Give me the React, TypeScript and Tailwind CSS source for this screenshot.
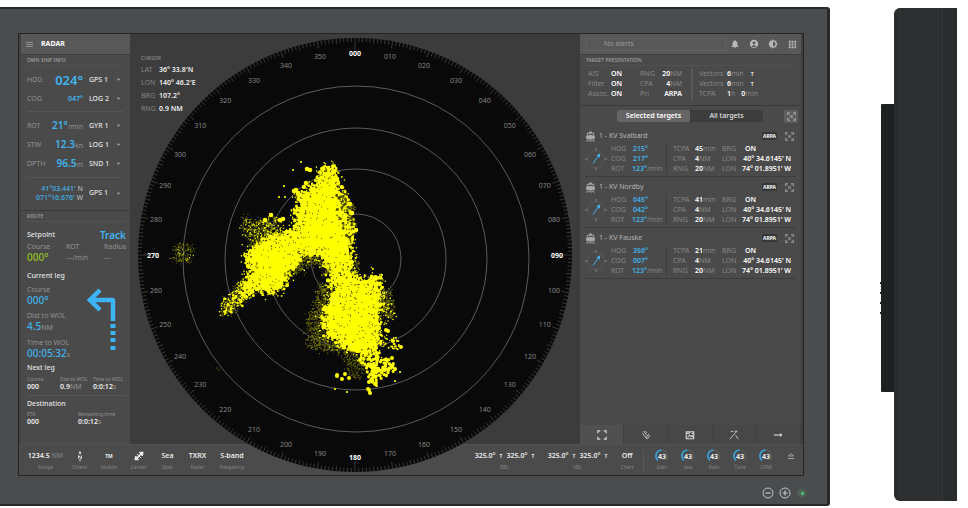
import type { ReactNode } from 'react';
import {
  MdAccountCircle,
  MdApps,
  MdArrowDropDown,
  MdBrightness6,
  MdDirectionsBoat,
  MdMenu,
  MdNotifications,
} from 'react-icons/md';

type Point = [number, number];

interface Target {
  name: string;
  hdg: string;
  cog: string;
  tcpa: string;
}

const targets: Target[] = [
  { name: '1 - KV Svalbard', hdg: '215°', cog: '217°', tcpa: '45' },
  { name: '1 - KV Nordby', hdg: '045°', cog: '042°', tcpa: '41' },
  { name: '1 - KV Fauske', hdg: '356°', cog: '007°', tcpa: '21' },
];

const gauges = ['Gain', 'Sea', 'Rain', 'Tune', 'CFAR'];

// Radar geometry, in the svg's own units
const DIAL = { x: 355, y: 255, r: 217 };
const RINGS = { x: 356, y: 259, radii: [45, 90, 131, 173] };

// Small seeded generator so the echoes are the same on every render
function createRandom(seed: number) {
  let s = seed;
  return () => {
    s = (s * 1664525 + 1013904223) % 4294967296;
    return s / 4294967296;
  };
}

function inside([x, y]: Point, poly: Point[]) {
  let hit = false;
  for (let i = 0, j = poly.length - 1; i < poly.length; j = i++) {
    const [xi, yi] = poly[i];
    const [xj, yj] = poly[j];
    if (yi > y !== yj > y && x < ((xj - xi) * (y - yi)) / (yj - yi) + xi) hit = !hit;
  }
  return hit;
}

// Path of zero-length segments: round caps turn each one into a dot
function scatter(poly: Point[], count: number, spread: number, seed: number) {
  const rand = createRandom(seed);
  const xs = poly.map((p) => p[0]);
  const ys = poly.map((p) => p[1]);
  const minX = Math.min(...xs);
  const minY = Math.min(...ys);
  const w = Math.max(...xs) - minX;
  const h = Math.max(...ys) - minY;
  let d = '';
  let placed = 0;
  while (placed < count) {
    const p: Point = [minX + rand() * w, minY + rand() * h];
    if (!inside(p, poly)) continue;
    const x = p[0] + (rand() + rand() - 1) * spread;
    const y = p[1] + (rand() + rand() - 1) * spread;
    d += `M${x.toFixed(1)} ${y.toFixed(1)}h0`;
    placed++;
  }
  return d;
}

// Dots along the outline, which give a solid mass its ragged edge
function fringe(poly: Point[], perSide: number, spread: number, seed: number) {
  const rand = createRandom(seed);
  let d = '';
  poly.forEach(([x1, y1], i) => {
    const [x2, y2] = poly[(i + 1) % poly.length];
    for (let n = 0; n < perSide; n++) {
      const t = rand();
      const x = x1 + (x2 - x1) * t + (rand() + rand() - 1) * spread;
      const y = y1 + (y2 - y1) * t + (rand() + rand() - 1) * spread;
      d += `M${x.toFixed(1)} ${y.toFixed(1)}h0`;
    }
  });
  return d;
}

function dots(points: Point[]) {
  return points.map(([x, y]) => `M${x} ${y}h0`).join('');
}

const upperMass: Point[] = [
  [331, 169], [335, 178], [337, 190], [340, 198], [342, 206], [342, 216], [349, 226],
  [348, 240], [349, 250], [350, 262], [348, 270], [341, 273], [333, 271], [328, 262],
  [321, 253], [311, 251], [301, 256], [294, 263], [289, 271], [284, 280], [279, 290],
  [266, 290], [254, 289], [249, 281], [253, 269], [250, 261], [247, 254], [256, 248],
  [265, 242], [276, 237], [288, 235], [297, 229], [300, 222], [297, 214], [301, 206],
  [301, 197], [308, 192], [316, 184], [322, 176], [327, 171],
];

const lowerMass: Point[] = [
  [332, 280], [346, 274], [358, 281], [374, 279], [378, 288], [378, 303], [377, 318],
  [374, 327], [380, 338], [376, 347], [366, 350], [354, 348], [342, 343], [333, 336],
  [328, 330], [326, 320], [328, 308], [333, 300], [336, 291],
];

const lowerTip: Point[] = [
  [360, 348], [374, 350], [382, 359], [392, 363], [394, 370], [384, 376], [377, 376],
  [375, 384], [371, 379], [367, 368],
];

const tail: Point[] = [[250, 279], [256, 288], [244, 300], [232, 312], [222, 315], [221, 305], [232, 294], [240, 284]];
const upperTail: Point[] = [[250, 277], [260, 290], [248, 298], [240, 300], [242, 288]];
const upperRight: Point[] = [[337, 188], [345, 196], [352, 206], [355, 230], [350, 242], [340, 232], [338, 212]];
const upperLeft: Point[] = [[243, 217], [262, 222], [276, 216], [288, 236], [270, 246], [252, 246], [244, 234]];
const innerShade: Point[] = [[296, 258], [312, 250], [326, 254], [336, 272], [326, 276], [314, 262], [300, 272], [290, 274]];
const lowerLeft: Point[] = [[318, 284], [334, 282], [326, 306], [324, 330], [340, 346], [352, 352], [328, 350], [308, 348], [308, 318], [316, 304]];
const lowerRight: Point[] = [[377, 290], [390, 290], [394, 308], [394, 320], [382, 316]];
const bottomShade: Point[] = [[344, 350], [360, 354], [368, 370], [356, 380], [347, 372]];
const eastShade: Point[] = [[349, 262], [358, 260], [360, 272], [352, 276]];
const westEcho: Point[] = [[174, 245], [192, 245], [194, 262], [175, 262]];
const eastClumps: Point[] = [[380, 344], [396, 336], [402, 347], [390, 352]];

const upperEdge: Point[] = [
  [307, 169], [310, 170], [333, 168], [334, 172], [294, 191], [298, 193], [296, 190], [300, 195],
  [280, 220], [283, 219], [271, 215], [265, 220], [342, 187], [346, 198], [350, 204], [352, 213],
  [356, 230], [352, 239], [338, 183], [306, 183], [246, 255], [248, 266],
];
const lowerEdge: Point[] = [
  [337, 375], [342, 379], [345, 374], [349, 378], [337, 376], [368, 389], [370, 393], [369, 390],
  [392, 358], [395, 369], [386, 330], [366, 348], [369, 382], [375, 384], [360, 360], [393, 341],
  [401, 347], [378, 278], [350, 275], [388, 331],
];
const specks: Point[] = [
  [301, 162], [293, 170], [284, 186], [279, 197], [285, 197], [373, 269], [382, 275], [400, 372],
  [395, 381], [335, 389], [347, 392], [296, 202],
];

const tabCls = 'flex h-[19px] items-center justify-center border-r border-[#414141]';

function Caret() {
  return <MdArrowDropDown className="h-[9px] w-[9px] shrink-0 text-[#a5a5a5]" />;
}

function SourceSelect({ label, value }: { label: string; value: string }) {
  return (
    <div className="ml-[6px] flex w-[34px] shrink-0 items-center justify-between">
      <select
        aria-label={label}
        defaultValue={value}
        className="w-[25px] appearance-none bg-transparent text-[7px] leading-[10px] font-medium text-[#e2e2e2]"
      >
        <option>{value}</option>
      </select>
      <Caret />
    </div>
  );
}

interface ShipRowProps {
  label: string;
  value: string;
  unit?: string;
  source: string;
  valueClass?: string;
}

function ShipRow({ label, value, unit, source, valueClass = 'text-[10px]' }: ShipRowProps) {
  return (
    <div className="flex h-[19px] items-center">
      <span className="text-[#929292]">{label}</span>
      <span className="flex flex-1 items-baseline justify-end">
        <span className={`font-semibold text-[#41b2ec] ${valueClass}`}>{value}</span>
        {unit && <span className="text-[#929292]">{unit}</span>}
      </span>
      <SourceSelect label={`${label} source`} value={source} />
    </div>
  );
}

function SectionTitle({ children }: { children: ReactNode }) {
  return (
    <h2 className="h-[11px] border-b border-[#525252] text-[5px] leading-[11px] font-medium text-[#a3a3a3]">
      {children}
    </h2>
  );
}

function RouteValue({ label, value, unit }: { label: string; value: string; unit?: string }) {
  return (
    <div>
      <div className="leading-[10px] text-[#929292]">{label}</div>
      <div className="flex items-baseline leading-[11px]">
        <span className="text-[10px] font-medium text-[#41b2ec]">{value}</span>
        {unit && <span className="text-[#929292]">{unit}</span>}
      </div>
    </div>
  );
}

function SmallValue({ label, value, unit }: { label: string; value: string; unit?: string }) {
  return (
    <div className="whitespace-nowrap">
      <div className="text-[5px] leading-[8px] text-[#929292]">{label}</div>
      <div className="leading-[8px] font-semibold text-[#ececec]">
        {value}
        {unit && <span className="font-normal text-[#929292]">{unit}</span>}
      </div>
    </div>
  );
}

function TurnArrow() {
  return (
    <svg viewBox="0 0 30 64" className="mt-[3px] h-[64px] w-[30px] text-[#3db5f5]" fill="none" stroke="currentColor">
      <path d="M13 2 3 12l10 10M3 12h22q1 0 1 1v20" strokeWidth="4.5" />
      <path d="M26 36v4M26 43v4M26 50v4M26 58v4" strokeWidth="5" />
    </svg>
  );
}

function LeftPanel() {
  return (
    <aside className="col-start-1 row-start-1 flex flex-col border-l-2 border-[#424242] bg-[#4a4a4a]">
      <header className="flex h-5 items-center gap-[7px] bg-[#585858] pl-[4px]">
        <button type="button" aria-label="Menu" className="text-[#a8a8a8]">
          <MdMenu className="h-[9px] w-[9px]" />
        </button>
        <h1 className="text-[7px] font-bold text-white">RADAR</h1>
      </header>
      <div className="border-t border-[#3e3e3e] pr-[7px] pl-[6px]">
        <SectionTitle>OWN SHIP INFO</SectionTitle>
        <div className="border-b border-[#565656] pt-1 pb-[3px]">
          <ShipRow label="HDG" value="024°" source="GPS 1" valueClass="text-[13px]" />
          <ShipRow label="COG" value="047°" source="LOG 2" valueClass="text-[7px]" />
        </div>
        <div className="border-b border-[#565656] py-1">
          <ShipRow label="ROT" value="21°" unit="/min" source="GYR 1" />
          <ShipRow label="STW" value="12.3" unit="kn" source="LOG 1" />
          <ShipRow label="DPTH" value="96.5" unit="m" source="SND 1" />
        </div>
        <div className="flex items-center pt-[6px] pb-2">
          <div className="flex-1 text-right leading-[9px] font-medium text-[#41b2ec]">
            <div>41°03.441' <span className="text-[#b5b5b5]">N</span></div>
            <div>071°16.676' <span className="text-[#b5b5b5]">W</span></div>
          </div>
          <SourceSelect label="Position source" value="GPS 1" />
        </div>
      </div>
      <div className="border-t border-[#3a3a3a] pr-[4px] pl-[6px]">
        <SectionTitle>ROUTE</SectionTitle>
        <div className="mt-[6px] flex h-[13px] items-center justify-between">
          <h3 className="font-medium text-[#e2e2e2]">Setpoint</h3>
          <span className="text-[10px] font-semibold text-[#41b2ec]">Track</span>
        </div>
        <div className="mt-px grid grid-cols-[39px_38px_1fr] text-[#929292]">
          <span className="leading-[10px]">Course</span>
          <span className="leading-[10px]">ROT</span>
          <span className="leading-[10px]">Radius</span>
          <span className="text-[10px] leading-[11px] font-medium text-[#93c11e]">000°</span>
          <span className="leading-[11px]">---/min</span>
          <span className="leading-[11px]">---</span>
        </div>
        <h3 className="mt-2 leading-[10px] font-medium text-[#e2e2e2]">Current leg</h3>
        <div className="mt-1 flex justify-between pr-[9px]">
          <div className="flex flex-col gap-[5px]">
            <RouteValue label="Course" value="000°" />
            <RouteValue label="Dist to WOL" value="4.5" unit="NM" />
            <RouteValue label="Time to WOL" value="00:05:32" unit="s" />
          </div>
          <TurnArrow />
        </div>
        <h3 className="mt-[3px] leading-[10px] font-medium text-[#e2e2e2]">Next leg</h3>
        <div className="mt-[2px] grid grid-cols-[33px_33px_1fr] border-b border-[#565656] pb-1">
          <SmallValue label="Course" value="000" />
          <SmallValue label="Dist to WOL" value="0.9" unit="NM" />
          <SmallValue label="Time to WOL" value="0:0:12" unit="s" />
        </div>
        <h3 className="mt-[3px] leading-[10px] font-medium text-[#e2e2e2]">Destination</h3>
        <div className="mt-px grid grid-cols-[51px_1fr]">
          <SmallValue label="ETA" value="000" />
          <SmallValue label="Remaining time" value="0:0:12" unit="s" />
        </div>
      </div>
    </aside>
  );
}

function polar(deg: number, r: number): Point {
  const a = (deg * Math.PI) / 180;
  return [DIAL.x + Math.sin(a) * r, DIAL.y - Math.cos(a) * r];
}

function BearingTicks() {
  const ticks = Array.from({ length: 360 }, (_, deg) => {
    const len = deg % 90 === 0 ? 11 : deg % 10 === 0 ? 7 : deg % 5 === 0 ? 5 : 4;
    const [x1, y1] = polar(deg, DIAL.r);
    const [x2, y2] = polar(deg, DIAL.r - len);
    return `M${x1.toFixed(1)} ${y1.toFixed(1)}L${x2.toFixed(1)} ${y2.toFixed(1)}`;
  });
  return <path d={ticks.join('')} stroke="#585858" strokeWidth="0.6" />;
}

function BearingLabels() {
  return (
    <>
      {Array.from({ length: 36 }, (_, i) => {
        const deg = i * 10;
        const [x, y] = polar(deg, 202);
        const main = deg % 90 === 0;
        return (
          <text
            key={deg}
            x={x}
            y={y + 2.5}
            textAnchor="middle"
            className={main ? 'fill-white text-[7px] font-bold' : 'fill-[#868686] text-[7px]'}
          >
            {String(deg).padStart(3, '0')}
          </text>
        );
      })}
    </>
  );
}

function Echoes() {
  return (
    <g strokeLinecap="round" fill="none">
      <g stroke="#6c6c08">
        <path d={scatter(upperLeft, 520, 5, 3)} strokeWidth="1.2" />
        <path d={scatter(innerShade, 420, 5, 4)} strokeWidth="1.3" />
        <path d={scatter(lowerLeft, 760, 6, 5)} strokeWidth="1.2" />
        <path d={scatter(lowerRight, 240, 4, 6)} strokeWidth="1.3" />
        <path d={scatter(upperRight, 260, 5, 7)} strokeWidth="1.8" />
        <path d={scatter(bottomShade, 160, 5, 8)} strokeWidth="1.3" />
        <path d={scatter(tail, 420, 6, 9)} strokeWidth="1.2" />
        <path d={scatter(westEcho, 170, 4, 10)} strokeWidth="1" />
        <path d={scatter(eastShade, 50, 4, 24)} strokeWidth="1.4" />
      </g>
      <g fill="#ffff00">
        <polygon points={upperMass.join(' ')} />
        <polygon points={lowerMass.join(' ')} />
      </g>
      <g stroke="#ffff00">
        <path d={fringe(upperMass, 9, 6, 11)} strokeWidth="2.8" />
        <path d={fringe(upperMass, 16, 11, 12)} strokeWidth="1.6" />
        <path d={fringe(upperMass, 3, 6, 13)} strokeWidth="4.4" />
        <path d={fringe(lowerMass, 14, 7, 14)} strokeWidth="2.8" />
        <path d={fringe(lowerMass, 22, 13, 15)} strokeWidth="1.5" />
        <path d={fringe(lowerMass, 5, 5, 16)} strokeWidth="4.4" />
        <path d={scatter(lowerTip, 150, 5, 17)} strokeWidth="3.2" />
        <path d={scatter(tail, 130, 5, 18)} strokeWidth="1.5" />
        <path d={scatter(tail, 26, 5, 19)} strokeWidth="2.6" />
        <path d={scatter(upperTail, 46, 4, 26)} strokeWidth="3" />
        <path d={scatter(upperLeft, 130, 6, 20)} strokeWidth="1.4" />
        <path d={scatter(upperRight, 50, 5, 21)} strokeWidth="2.8" />
        <path d={scatter(eastClumps, 22, 4, 22)} strokeWidth="2" />
        <path d={scatter(lowerRight, 30, 5, 25)} strokeWidth="1.6" />
        <path d={scatter(westEcho, 28, 5, 23)} strokeWidth="1" />
        <path d={dots(upperEdge)} strokeWidth="4.6" />
        <path d={dots(lowerEdge)} strokeWidth="4" />
        <path d={dots(specks)} strokeWidth="2.2" />
      </g>
      <g stroke="#4a4a08">
        <path d={scatter(upperMass, 190, 3, 31)} strokeWidth="1" />
        <path d={scatter(lowerMass, 120, 3, 32)} strokeWidth="1.1" />
        <path d={fringe(upperMass, 3, 10, 34)} strokeWidth="1.6" />
        <path d={fringe(lowerMass, 3, 10, 35)} strokeWidth="1.6" />
        <path d={scatter(upperRight, 22, 3, 33)} strokeWidth="2.8" />
      </g>
      <path d="M217 368h0M219 370h0" stroke="#77770a" strokeWidth="1.4" />
    </g>
  );
}

function Radar() {
  return (
    <svg viewBox="130 34 450 441" role="img" aria-label="Radar picture" className="pointer-events-none col-start-2 row-span-2 row-start-1 w-full">
      <circle cx={DIAL.x} cy={DIAL.y} r={DIAL.r} fill="#090909" />
      <BearingTicks />
      {RINGS.radii.map((r) => (
        <circle key={r} cx={RINGS.x} cy={RINGS.y} r={r} fill="none" stroke="#6e6e6e" strokeWidth="0.8" />
      ))}
      <Echoes />
      <BearingLabels />
    </svg>
  );
}

function CursorInfo() {
  const rows = [
    ['LAT', '36° 33.8′N'],
    ['LON', '140° 46.2′E'],
    ['BRG', '107.2°'],
    ['RNG', '0.9 NM'],
  ];
  return (
    <section className="col-start-2 row-start-1 self-start justify-self-start pt-[20px] pl-[11px]">
      <h2 className="text-[5px] leading-[8px] font-medium text-[#929292]">CURSOR</h2>
      <dl className="mt-px grid grid-cols-[18px_auto] leading-[13px]">
        {rows.map(([label, value]) => (
          <div key={label} className="contents">
            <dt className="text-[#858585]">{label}</dt>
            <dd className="font-semibold text-[#ececec]">{value}</dd>
          </div>
        ))}
      </dl>
    </section>
  );
}

function Corners({ className, children }: { className: string; children?: ReactNode }) {
  return (
    <svg viewBox="0 0 12 12" className={className} fill="none" stroke="currentColor">
      <path d="M1 4V1h3M8 1h3v3M11 8v3H8M4 11H1V8" strokeWidth="1.5" />
      {children}
    </svg>
  );
}

function LocateIcon() {
  return (
    <Corners className="h-[9px] w-[9px]">
      <path d="M3.5 3.5 5 5M8.5 3.5 7 5M3.5 8.5 5 7M8.5 8.5 7 7" />
      <circle cx="6" cy="6" r="1.2" fill="currentColor" stroke="none" />
    </Corners>
  );
}

function Compass() {
  return (
    <svg viewBox="0 0 22 22" className="h-[22px] w-[22px]" fill="none">
      <circle cx="11" cy="11" r="8.5" stroke="#5c5c5c" strokeWidth="0.7" />
      <path d="M11 0v2.500M11 19.500V22M0 11h2.500M19.500 11H22" stroke="#9c9c9c" strokeWidth="0.8" />
      <path d="m8 15.500 5-7" stroke="#41b2ec" strokeWidth="1" />
      <path d="m15.200 5.200-.4 4.600-3.500-2.400z" fill="#41b2ec" />
    </svg>
  );
}

function Unit({ children }: { children: ReactNode }) {
  return <span className="font-normal text-[#868686]">{children}</span>;
}

function TrueMark() {
  return <span className="text-[5px] font-bold text-[#e2e2e2]">T</span>;
}

function TargetPresentation() {
  return (
    <section className="border-y border-t-[#3e3e3e] border-b-[#3a3a3a] pr-[6px] pl-[6px]">
      <SectionTitle>TARGET PRESENTATION</SectionTitle>
      <div className="flex pt-[3px] pb-[6px] pl-[2px] leading-[10px] text-[#868686]">
        <dl className="grid grid-cols-[23px_29px]">
          <dt>AIS</dt>
          <dd className="font-semibold text-white">ON</dd>
          <dt>Filter</dt>
          <dd className="font-semibold text-white">ON</dd>
          <dt>Assoc.</dt>
          <dd className="font-semibold text-white">ON</dd>
        </dl>
        <dl className="grid grid-cols-[17px_25px] border-r-2 border-[#5a5a5a] pr-[9px]">
          <dt>RNG</dt>
          <dd className="text-right font-semibold text-white">20<Unit>NM</Unit></dd>
          <dt>CPA</dt>
          <dd className="text-right font-semibold text-white">4<Unit>NM</Unit></dd>
          <dt>Pri</dt>
          <dd className="text-right font-semibold text-white">ARPA</dd>
        </dl>
        <dl className="grid grid-cols-[28px_auto] pl-[6px]">
          <dt>Vectors</dt>
          <dd className="flex items-center gap-[7px] font-semibold text-white">
            <span>6<Unit>min</Unit></span>
            <TrueMark />
          </dd>
          <dt>Vectors</dt>
          <dd className="flex items-center gap-[7px] font-semibold text-white">
            <span>6<Unit>min</Unit></span>
            <TrueMark />
          </dd>
          <dt>TCPA</dt>
          <dd className="flex gap-[6px] font-semibold text-white">
            <span>1<Unit>h</Unit></span>
            <span>0<Unit>min</Unit></span>
          </dd>
        </dl>
      </div>
    </section>
  );
}

function TargetCard({ target }: { target: Target }) {
  return (
    <li className="border-b border-[#3d3d3d] pt-1 pb-[2px]">
      <div className="flex h-[12px] items-center">
        <MdDirectionsBoat className="mr-[3px] h-[11px] w-[11px] text-[#a8a8a8]" />
        <h3 className="flex-1 text-[#b5b5b5]">{target.name}</h3>
        <span className="mr-[8px] rounded-[1px] bg-[#363636] px-px text-[5px] leading-[8px] font-bold text-white">ARPA</span>
        <button type="button" aria-label={`Locate ${target.name}`} className="mr-[2px] text-[#a0a0a0]">
          <LocateIcon />
        </button>
      </div>
      <div className="mt-[2px] flex items-center leading-[10px]">
        <Compass />
        <dl className="grid grid-cols-[21px_34px] pl-[4px]">
          <dt className="text-[#868686]">HDG</dt>
          <dd className="pl-px font-semibold text-[#41b2ec]">{target.hdg}</dd>
          <dt className="text-[#868686]">COG</dt>
          <dd className="pl-px font-semibold text-[#41b2ec]">{target.cog}</dd>
          <dt className="text-[#868686]">ROT</dt>
          <dd className="font-semibold text-[#41b2ec]">123°<Unit>/min</Unit></dd>
        </dl>
        <dl className="grid flex-1 grid-cols-[22px_27px_20px_auto] justify-start border-l border-[#3d3d3d] pl-[6px] text-[#868686]">
          <dt>TCPA</dt>
          <dd className="font-semibold text-white">{target.tcpa}<Unit>min</Unit></dd>
          <dt>BRG</dt>
          <dd className="pl-[3px] font-semibold text-white">ON</dd>
          <dt>CPA</dt>
          <dd className="font-semibold text-white">4<Unit>NM</Unit></dd>
          <dt>LON</dt>
          <dd className="text-right font-semibold whitespace-nowrap text-white">40° 34.6145' N</dd>
          <dt>RNG</dt>
          <dd className="font-semibold text-white">20<Unit>NM</Unit></dd>
          <dt>LON</dt>
          <dd className="text-right font-semibold whitespace-nowrap text-white">74° 01.8951' W</dd>
        </dl>
      </div>
    </li>
  );
}

function RightPanel() {
  return (
    <aside className="col-start-3 row-start-1 flex flex-col border-r-2 border-[#3f3f40] bg-[#4a4a4a]">
      <header className="flex h-5 items-center bg-[#585858] pr-[3px] pl-[6px]">
        <div className="mr-[4px] flex h-[13px] flex-1 items-center rounded-[2px] border border-[#616161] pl-[17px] text-[#9c9c9c]">
          No alerts
        </div>
        <div className="flex gap-[9px] text-[#b8b8b8]">
          <button type="button" aria-label="Alerts"><MdNotifications className="h-[10px] w-[10px]" /></button>
          <button type="button" aria-label="Account"><MdAccountCircle className="h-[10px] w-[10px]" /></button>
          <button type="button" aria-label="Brightness"><MdBrightness6 className="h-[10px] w-[10px]" /></button>
          <button type="button" aria-label="Apps"><MdApps className="h-[11px] w-[11px]" /></button>
        </div>
      </header>
      <TargetPresentation />
      <div className="flex h-[20px] items-center justify-end pr-[3px]">
        <div className="flex rounded-[2px] bg-[#3d3d3d]">
          <button type="button" className="h-[12px] w-[73px] rounded-[2px] bg-[#656565] font-semibold text-white">
            Selected targets
          </button>
          <button type="button" className="h-[12px] w-[73px] font-medium text-[#e2e2e2]">
            All targets
          </button>
        </div>
        <button type="button" aria-label="Locate all" className="ml-[21px] flex h-[13px] w-[14px] items-center justify-center rounded-[2px] bg-[#5f5f5f] text-[#a8a8a8]">
          <LocateIcon />
        </button>
      </div>
      <ul className="flex-1 px-[5px]">
        {targets.map((target) => (
          <TargetCard key={target.name} target={target} />
        ))}
      </ul>
      <nav className="grid grid-cols-5 bg-[#474747] text-[#d5d5d5]">
        <button type="button" aria-label="Targets" className={`${tabCls} bg-[#505050]`}>
          <Corners className="h-[10px] w-[10px]" />
        </button>
        <button type="button" aria-label="Trails" className={tabCls}>
          <svg viewBox="0 0 12 12" className="h-[10px] w-[10px]" fill="none" stroke="currentColor">
            <path d="m3 1 3.500 5M1.500 3.500 6 9.500M6 9.500l1.500 1.500 3-4.500L9 5 6 9.500M5.500 1.500l1.500 2" />
          </svg>
        </button>
        <button type="button" aria-label="Chart" className={tabCls}>
          <svg viewBox="0 0 12 12" className="h-[10px] w-[10px]" fill="none" stroke="currentColor">
            <path d="M1.500 2h9v8.500h-9zM1 4h3.500l2-2M3 9l2.500-3L7 8l1.500-1.500L10 9M8 4h2" strokeWidth="1.3" />
          </svg>
        </button>
        <button type="button" aria-label="Tools" className={tabCls}>
          <svg viewBox="0 0 12 12" className="h-[10px] w-[10px]" fill="none" stroke="currentColor">
            <path d="m1 11 8.500-9.500M2 1.500l3 .5M8 6.500l3 4.500M6.500 1.500H10" />
          </svg>
        </button>
        <button type="button" aria-label="Next" className={tabCls}>
          <svg viewBox="0 0 12 12" className="h-[10px] w-[10px]" fill="none" stroke="currentColor">
            <path d="M1 6h9" strokeWidth="1.4" />
            <path d="m8.500 3.500 3 2.500-3 2.500z" fill="currentColor" stroke="none" />
          </svg>
        </button>
      </nav>
    </aside>
  );
}

function BarItem({ label, width, children }: { label: string; width: string; children: ReactNode }) {
  return (
    <div className={`flex flex-col items-center ${width}`}>
      <div className="flex h-[12px] items-center font-semibold whitespace-nowrap text-[#ececec]">{children}</div>
      <div className="mt-px text-[5px] leading-[9px] text-[#868686]">{label}</div>
    </div>
  );
}

function BearingPair() {
  return (
    <span className="flex items-center gap-[4px]">
      325.0° <TrueMark /> 325.0° <TrueMark />
    </span>
  );
}

function Gauge() {
  return (
    <svg viewBox="0 0 16 14" className="h-[14px] w-[16px]" fill="none">
      <path d="M7.500 1a6 6 0 0 1 4 10.500" stroke="#5e5e5e" strokeWidth="1.2" />
      <path d="M4 11.500A6 6 0 0 1 7.500 1" stroke="#35a5dd" strokeWidth="1.6" />
      <text x="8" y="10" textAnchor="middle" className="fill-white text-[7px] font-semibold">43</text>
    </svg>
  );
}

function BottomBar() {
  return (
    <footer className="col-span-3 col-start-1 row-start-2 flex items-start justify-between border-t border-[#505050] bg-[#4b4b4b] pt-[5px]">
      <div className="flex pl-[7px]">
        <BarItem label="Range" width="w-[39px]">1234.5&nbsp;<Unit>NM</Unit></BarItem>
        <BarItem label="Orient" width="w-[29px]">
          <svg viewBox="0 0 8 12" className="h-[11px] w-[8px]" fill="none" stroke="currentColor">
            <path d="M4 1v3M4 8.500v3M2.500 8.500V5l3 3.500V5" />
            <path d="M2.500 2.500 4 0l1.500 2.500z" fill="currentColor" stroke="none" />
          </svg>
        </BarItem>
        <BarItem label="Motion" width="w-[30px]"><span className="text-[5px] font-bold">TM</span></BarItem>
        <BarItem label="Center" width="w-[29px]">
          <svg viewBox="0 0 12 12" className="h-[10px] w-[10px]" fill="none" stroke="currentColor">
            <path d="m2 10 8-8" strokeWidth="2" />
            <path d="M6.500 1.500H11l-1 4.500zM5.500 10.500H1L2 6zM3.500 3.500l5 5" fill="currentColor" strokeWidth="1.2" />
          </svg>
        </BarItem>
        <BarItem label="Stab" width="w-[29px]">Sea</BarItem>
        <BarItem label="Radar" width="w-[31px]">TXRX</BarItem>
        <BarItem label="Frequency" width="w-[38px]">S-band</BarItem>
      </div>
      <div className="flex">
        <BarItem label="EBL" width="w-[73px]"><BearingPair /></BarItem>
        <BarItem label="VBL" width="w-[73px]"><BearingPair /></BarItem>
        <BarItem label="Chart" width="w-[26px]">Off</BarItem>
        <div className="mr-[5px] ml-[3px] h-[22px] w-px bg-[#585858]" />
        {gauges.map((label) => (
          <BarItem key={label} label={label} width="w-[26px]"><Gauge /></BarItem>
        ))}
        <button type="button" aria-label="Expand" className="flex h-[12px] w-[24px] items-center justify-center text-[#b0b0b0]">
          <svg viewBox="0 0 8 8" className="h-[8px] w-[8px]" fill="none" stroke="currentColor">
            <path d="m1.500 4 2.500-2.500L6.500 4zM1 6.500h6" strokeWidth="0.9" />
          </svg>
        </button>
      </div>
    </footer>
  );
}

function BezelControls() {
  return (
    <div className="flex h-[28px] items-center justify-end gap-[5px] pt-[6px] text-[#c3c7ca]">
      <button type="button" aria-label="Dim">
        <svg viewBox="0 0 12 12" className="h-[12px] w-[12px]" fill="none" stroke="currentColor">
          <circle cx="6" cy="6" r="5" />
          <path d="M3.500 6h5" strokeWidth="1.2" />
        </svg>
      </button>
      <button type="button" aria-label="Brighten">
        <svg viewBox="0 0 12 12" className="h-[12px] w-[12px]" fill="none" stroke="currentColor">
          <circle cx="6" cy="6" r="5" />
          <path d="M3.500 6h5M6 3.500v5" strokeWidth="1.2" />
        </svg>
      </button>
      <span className="flex h-[12px] w-[12px] items-center justify-center rounded-full bg-[radial-gradient(#4f7a5c,transparent_70%)]">
        <span className="h-[3px] w-[3px] rounded-full bg-[#52c274]" />
      </span>
    </div>
  );
}

function SideView() {
  return (
    <div className="mr-[11px] ml-[49px] flex pt-px pb-[5px]">
      <div className="mt-[96px] mb-[109px] flex">
        <div className="flex w-[2px] flex-col items-end justify-end gap-[8px] pb-[78px]">
          <i className="h-[2px] w-px bg-[#222526]" />
          <i className="h-[2px] w-px bg-[#222526]" />
          <i className="h-[2px] w-px bg-[#222526]" />
          <i className="h-[2px] w-px bg-[#222526]" />
        </div>
        <div className="w-[13px] rounded-l-[1px] bg-[#1e2122]" />
      </div>
      <div className="w-[48px] rounded-l-[6px] border-l-4 border-[#2a2d2e] bg-[#2d2f30]" />
      <div className="w-[15px] border-l border-[#353839] bg-[#292c2d]" />
    </div>
  );
}

export default function App() {
  return (
    <div className="flex min-h-screen bg-white pt-[7px] pb-[2px] font-['Noto_Sans',sans-serif] text-[7px] leading-[10px]">
      <main className="flex flex-1 flex-col rounded-r-[3px] border-y-2 border-r-[3px] border-[#27292b] bg-[#4b4c4e] pt-[24px] pr-[19px]">
        <div className="mr-[4px] ml-[18px] grid flex-1 grid-cols-[111px_1fr_223px] grid-rows-[1fr_31px] border border-[#232527] bg-[#3c3c3c]">
          <LeftPanel />
          <CursorInfo />
          <RightPanel />
          <BottomBar />
          <Radar />
        </div>
        <BezelControls />
      </main>
      <SideView />
    </div>
  );
}
